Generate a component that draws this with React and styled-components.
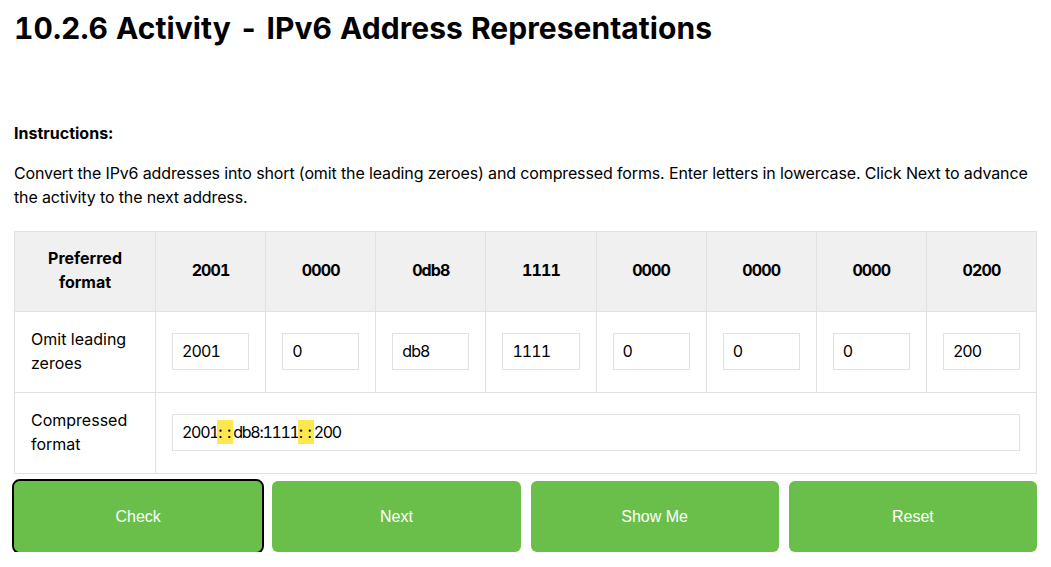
import React from "react";
import styled, { createGlobalStyle } from "styled-components";

const Global = createGlobalStyle`
  html, body { margin: 0; padding: 0; background: #fff; }
  body {
    font-family: Inter, "Noto Sans", sans-serif;
    color: #000;
    font-optical-sizing: none;
  }
  * { box-sizing: border-box; }
`;

const Page = styled.div`
  padding: 10px 14px 0 14px;
`;

const Title = styled.h1`
  margin: 0;
  font-size: 30px;
  line-height: 36px;
  font-weight: 700;
  font-feature-settings: "tnum" 1;
  letter-spacing: 0.05px;
`;

const Label = styled.div`
  margin-top: 75px;
  font-size: 16px;
  line-height: 24px;
  font-weight: 700;
`;

const Para = styled.p`
  margin: 16px 0 0 0;
  font-size: 16px;
  line-height: 24px;
  letter-spacing: -0.13px;
`;

const Table = styled.table`
  margin-top: 22px;
  width: 1023px;
  border-collapse: collapse;
  table-layout: fixed;
`;

const Row = styled.tr`
  height: ${(p) => p.$h}px;
  background: ${(p) => (p.$head ? "#f0f0f0" : "#fff")};
`;

const HeadCell = styled.th`
  border: 1px solid #dee2e6;
  font-size: 16px;
  line-height: 24px;
  font-weight: 700;
  text-align: center;
  padding: 0 10px 4px 10px;
  font-feature-settings: ${(p) => (p.$num ? '"tnum" 1' : "normal")};
  letter-spacing: ${(p) => (p.$num ? "-0.9px" : "0")};
`;

const RowLabel = styled.td`
  border: 1px solid #dee2e6;
  font-size: 16px;
  line-height: 24px;
  padding: 0 16px 2px 16px;
  text-align: left;
`;

const Cell = styled.td`
  border: 1px solid #dee2e6;
  padding: 0 16px 2px 16px;
`;

const Field = styled.div`
  height: 37px;
  width: 100%;
  border: 1px solid #dee2e6;
  padding: 0 9px;
  display: flex;
  align-items: center;
  font-size: 16px;
  white-space: pre;
  background: #fff;
  font-feature-settings: "tnum" 1;
  letter-spacing: ${(p) => (p.$tight ? "-1.3px" : "-0.9px")};
`;

const Mark = styled.span`
  display: inline-flex;
  justify-content: space-between;
  width: 16px;
  padding: 0 2px 0 1px;
  margin-left: -1px;
  background: #ffe84d;
  line-height: 24px;
  letter-spacing: 0;
`;

const Buttons = styled.div`
  margin-top: 7px;
  display: flex;
  gap: 10px;
  width: 1023px;
`;

const Button = styled.button`
  flex: 1;
  height: 71px;
  border: none;
  border-radius: 6px;
  background: #6abf4b;
  color: #fff;
  font-family: "Liberation Sans", Arial, sans-serif;
  font-size: 16px;
  outline: ${(p) => (p.$focus ? "2px solid #000" : "none")};
  outline-offset: 0;
  cursor: pointer;
`;

const groups = ["2001", "0000", "0db8", "1111", "0000", "0000", "0000", "0200"];
const short = ["2001", "0", "db8", "1111", "0", "0", "0", "200"];

const DoubleColon = () => (
  <Mark>
    <span>:</span>
    <span>:</span>
  </Mark>
);

export default function App() {
  return (
    <Page>
      <Global />
      <Title>10.2.6 Activity - IPv6 Address Representations</Title>
      <Label>Instructions:</Label>
      <Para>
        Convert the IPv6 addresses into short (omit the leading zeroes) and compressed forms. Enter letters in
        lowercase. Click Next to advance the activity to the next address.
      </Para>
      <Table>
        <colgroup>
          <col style={{ width: "141px" }} />
          {groups.map((_, i) => (
            <col key={i} />
          ))}
        </colgroup>
        <tbody>
          <Row $head $h={80}>
            <HeadCell>
              Preferred
              <br />
              format
            </HeadCell>
            {groups.map((g, i) => (
              <HeadCell key={i} $num>
                {g}
              </HeadCell>
            ))}
          </Row>
          <Row $h={81}>
            <RowLabel>
              Omit leading
              <br />
              zeroes
            </RowLabel>
            {short.map((s, i) => (
              <Cell key={i}>
                <Field>{s}</Field>
              </Cell>
            ))}
          </Row>
          <Row $h={81}>
            <RowLabel>
              Compressed
              <br />
              format
            </RowLabel>
            <Cell colSpan={8}>
              <Field $tight>
                2001
                <DoubleColon />
                db8:1111
                <DoubleColon />
                200
              </Field>
            </Cell>
          </Row>
        </tbody>
      </Table>
      <Buttons>
        <Button $focus>Check</Button>
        <Button>Next</Button>
        <Button>Show Me</Button>
        <Button>Reset</Button>
      </Buttons>
    </Page>
  );
}
